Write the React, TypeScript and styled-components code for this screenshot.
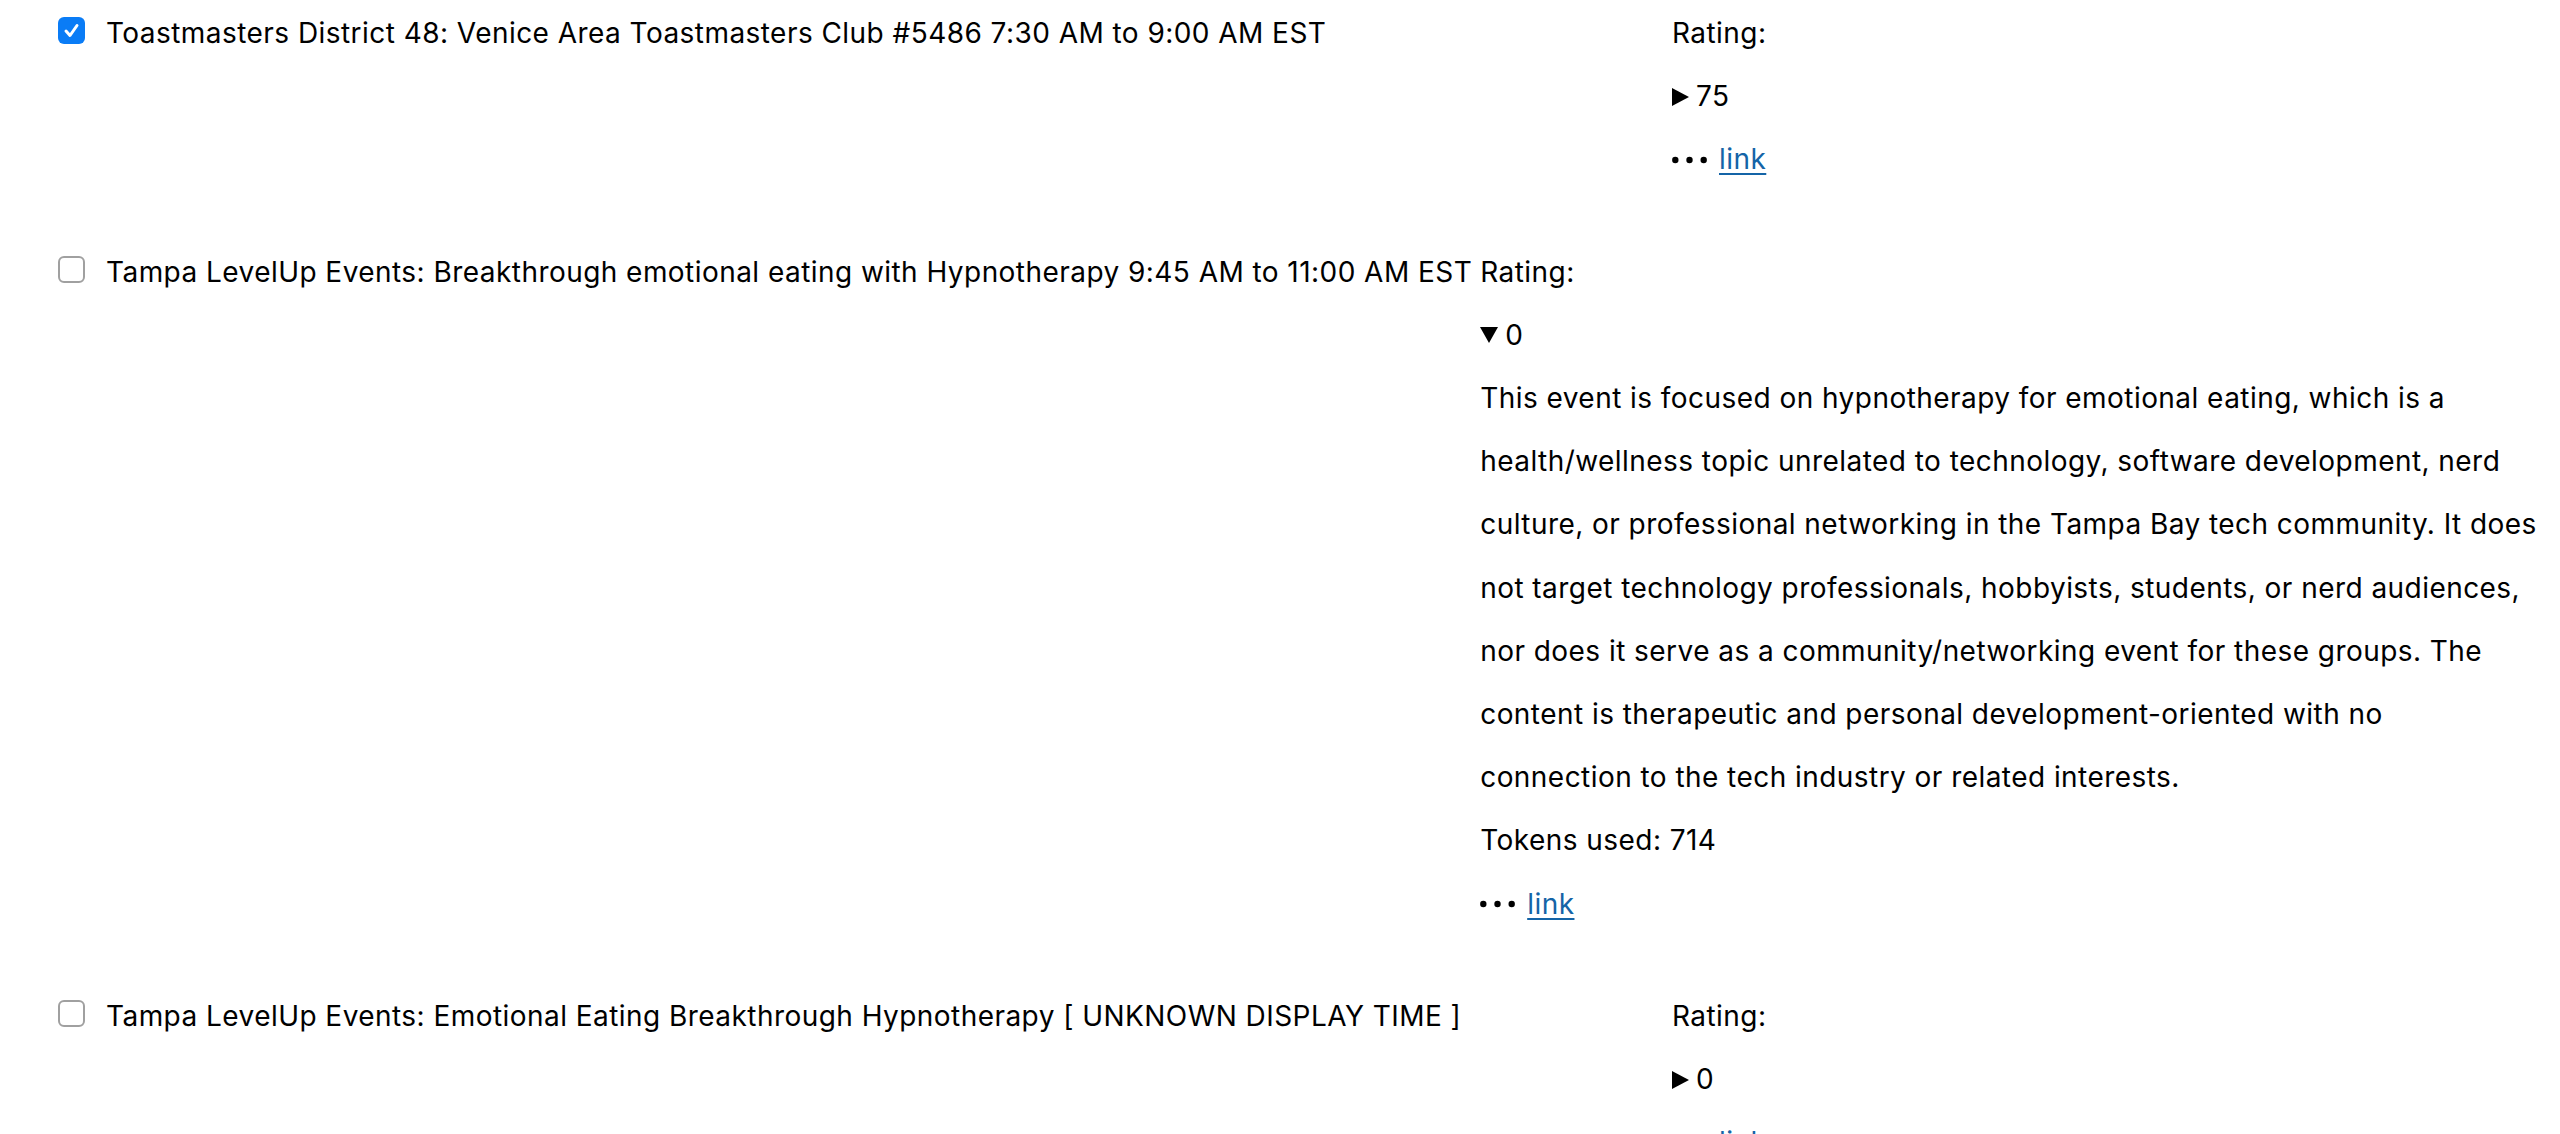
import React from "react";
import styled, { createGlobalStyle } from "styled-components";

const GlobalStyle = createGlobalStyle`
  html, body { margin: 0; padding: 0; background: #ffffff; }
  body {
    font-family: Inter, "Liberation Sans", sans-serif;
    font-size: 28px;
    letter-spacing: 0.45px;
    line-height: 63.2px;
    color: #000000;
  }
`;

const Page = styled.div`
  display: flex;
  flex-direction: column;
  gap: 49px;
  padding: 2px 16px 0 58px;
`;

const Row = styled.div`
  display: flex;
  align-items: flex-start;
  gap: 8px;
`;

const Label = styled.label`
  display: flex;
  align-items: flex-start;
  gap: 21px;
  flex: 1 1 auto;
  white-space: nowrap;
`;

const Box = styled.span<{ $checked: boolean }>`
  flex: 0 0 auto;
  width: 27px;
  height: 27px;
  margin-top: 15px;
  box-sizing: border-box;
  border-radius: 6px;
  display: flex;
  align-items: center;
  justify-content: center;
  background: ${(p) => (p.$checked ? "#0a7cf6" : "#ffffff")};
  border: ${(p) => (p.$checked ? "none" : "2px solid #a0a0a0")};
`;

const Column = styled.div`
  flex: 0 1 auto;
  min-width: 872px;
  display: flex;
  flex-direction: column;
`;

const Summary = styled.div`
  display: flex;
  align-items: center;
  gap: 7px;
`;

const Description = styled.p`
  margin: 0;
`;

const LinkLine = styled.div`
  display: flex;
  align-items: center;
  gap: 12px;
`;

const Link = styled.a`
  color: #1464a7;
  text-decoration: underline;
  text-underline-offset: 4px;
  text-decoration-thickness: 2px;
`;

const Check = () => (
  <svg width="17" height="17" viewBox="0 0 17 17">
    <path d="M3 9 L7 13.5 L14 3.5" fill="none" stroke="#fff" strokeWidth="3" strokeLinecap="round" strokeLinejoin="round" />
  </svg>
);

const Triangle = ({ open }: { open: boolean }) =>
  open ? (
    <svg width="18" height="16" viewBox="0 0 18 16">
      <path d="M0 0 L18 0 L9 16 Z" fill="#000" />
    </svg>
  ) : (
    <svg width="17" height="18" viewBox="0 0 17 18">
      <path d="M0 0 L17 9 L0 18 Z" fill="#000" />
    </svg>
  );

const Dots = () => (
  <svg width="35" height="8" viewBox="0 0 35 8">
    <circle cx="3.3" cy="4" r="3.2" fill="#000" />
    <circle cx="17.5" cy="4" r="3.2" fill="#000" />
    <circle cx="31.7" cy="4" r="3.2" fill="#000" />
  </svg>
);

type Item = {
  title: string;
  checked: boolean;
  rating: number;
  open: boolean;
  description?: string[];
  tokens?: number;
};

const items: Item[] = [
  {
    title: "Toastmasters District 48: Venice Area Toastmasters Club #5486 7:30 AM to 9:00 AM EST",
    checked: true,
    rating: 75,
    open: false,
  },
  {
    title: "Tampa LevelUp Events: Breakthrough emotional eating with Hypnotherapy 9:45 AM to 11:00 AM EST",
    checked: false,
    rating: 0,
    open: true,
    description: [
      "This event is focused on hypnotherapy for emotional eating, which is a health/wellness topic unrelated to technology, software development, nerd culture, or professional networking in the Tampa Bay tech community. It does not target technology professionals, hobbyists, students, or nerd audiences, nor does it serve as a community/networking event for these groups. The content is therapeutic and personal development-oriented with no",
      "connection to the tech industry or related interests.",
    ],
    tokens: 714,
  },
  {
    title: "Tampa LevelUp Events: Emotional Eating Breakthrough Hypnotherapy [ UNKNOWN DISPLAY TIME ]",
    checked: false,
    rating: 0,
    open: false,
  },
];

export default function App() {
  return (
    <>
      <GlobalStyle />
      <Page>
        {items.map((it, i) => (
          <Row key={i}>
            <Label>
              <Box $checked={it.checked}>{it.checked && <Check />}</Box>
              <span>{it.title}</span>
            </Label>
            <Column>
              <div>Rating:</div>
              <Summary>
                <Triangle open={it.open} />
                <span>{it.rating}</span>
              </Summary>
              {it.open && it.description && (
                <>
                  <Description>
                    {it.description.map((part, j) => (
                      <React.Fragment key={j}>
                        {j > 0 && <br />}
                        {part}
                      </React.Fragment>
                    ))}
                  </Description>
                  <div>Tokens used: {it.tokens}</div>
                </>
              )}
              <LinkLine>
                <Dots />
                <Link href="#">link</Link>
              </LinkLine>
            </Column>
          </Row>
        ))}
      </Page>
    </>
  );
}
